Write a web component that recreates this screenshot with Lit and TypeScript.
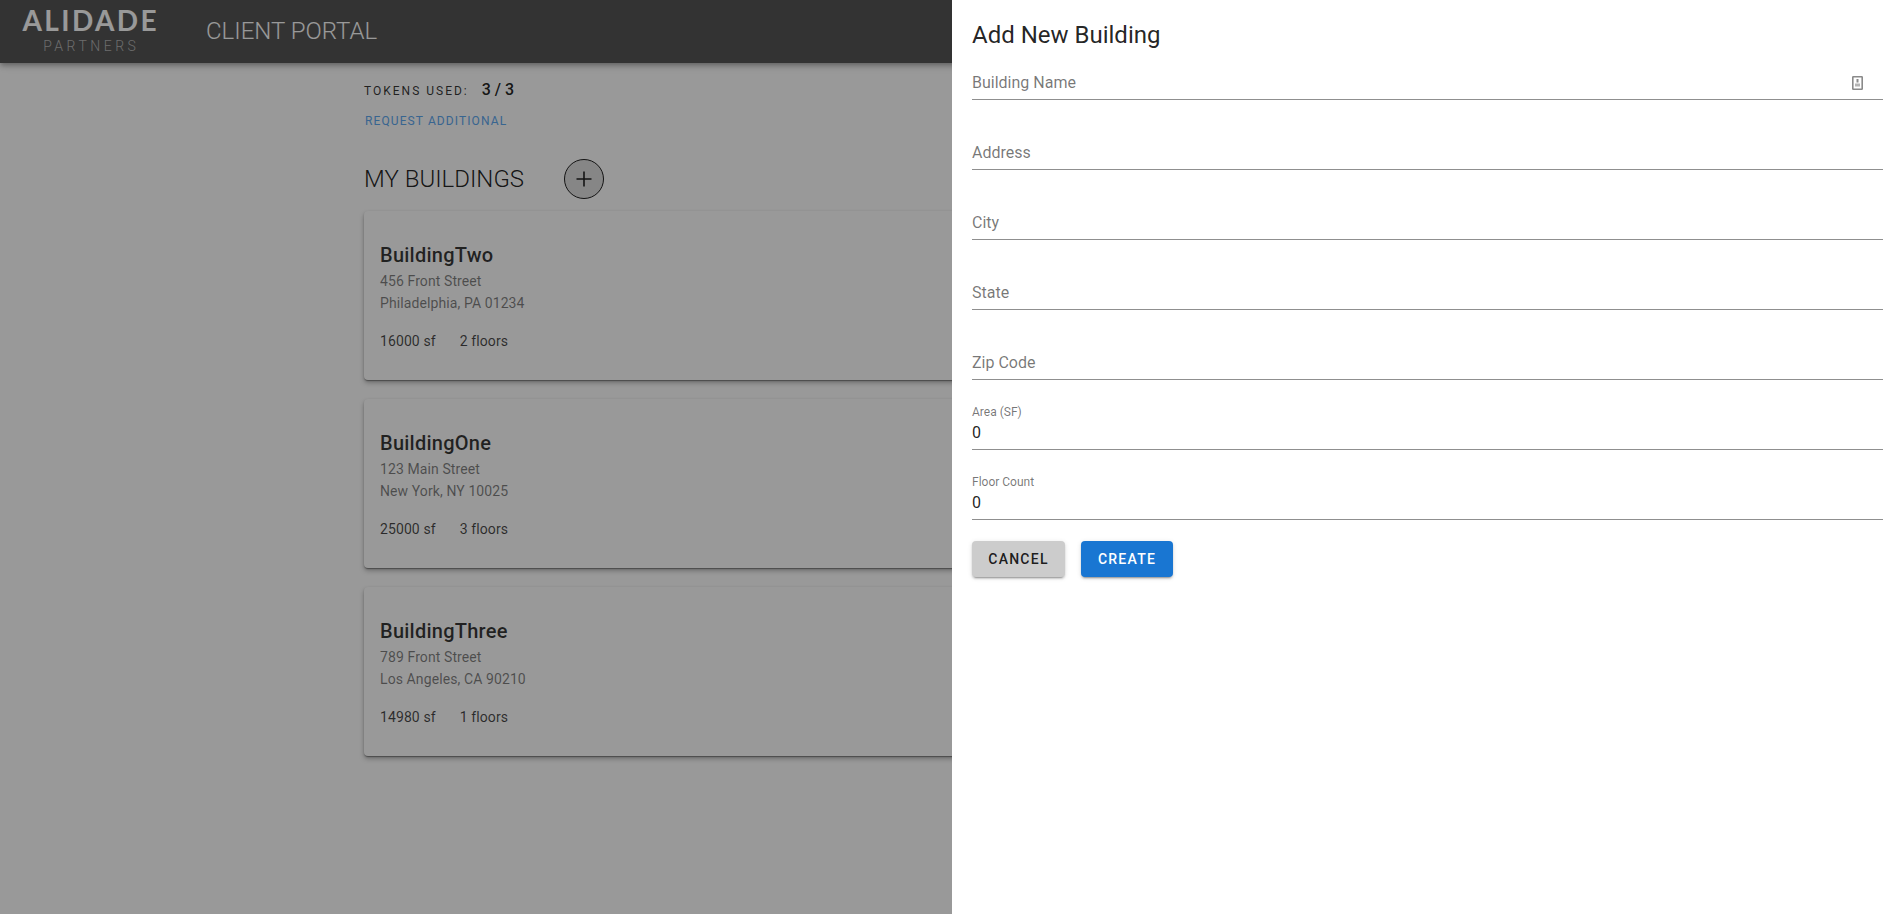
import { LitElement, html, css, svg } from "lit";
import { customElement } from "lit/decorators.js";

const buildings = [
  { name: "BuildingTwo", street: "456 Front Street", city: "Philadelphia, PA 01234", area: "16000 sf", floors: "2 floors" },
  { name: "BuildingOne", street: "123 Main Street", city: "New York, NY 10025", area: "25000 sf", floors: "3 floors" },
  { name: "BuildingThree", street: "789 Front Street", city: "Los Angeles, CA 90210", area: "14980 sf", floors: "1 floors" },
];

const plainFields = ["Building Name", "Address", "City", "State", "Zip Code"];
const valueFields = ["Area (SF)", "Floor Count"];

@customElement("app-root")
export class AppRoot extends LitElement {
  static styles = css`
    :host {
      display: block;
      position: relative;
      height: 914px;
      overflow: hidden;
      background: #fff;
      font-family: Roboto, "Liberation Sans", sans-serif;
      color: rgba(0, 0, 0, 0.87);
    }
    .topbar {
      height: 63px;
      background: #555;
      box-shadow: 0 2px 4px -1px rgba(0,0,0,.2), 0 4px 5px rgba(0,0,0,.14), 0 1px 10px rgba(0,0,0,.12);
      display: flex;
      align-items: flex-start;
      padding-left: 22px;
      position: relative;
    }
    .logo { display: flex; flex-direction: column; align-items: center; width: 135px; padding-top: 6px; }
    .logo-main {
      font-family: Lato, "Open Sans", sans-serif;
      font-weight: 700;
      font-size: 28px;
      line-height: 28px;
      letter-spacing: 2.4px;
      margin-right: -2.4px;
      color: #fff;
    }
    .logo-sub {
      margin-top: 5px;
      font-size: 14px;
      line-height: 14px;
      letter-spacing: 3.5px;
      margin-right: -3.5px;
      font-weight: 300;
      color: #b5b5b5;
    }
    .portal {
      margin-left: 49px;
      font-size: 24px;
      line-height: 62px;
      font-weight: 300;
      color: #fff;
    }
    .main { padding: 17px 0 0 364px; }
    .tokens { display: flex; align-items: baseline; height: 22px; }
    .tokens-label { font-size: 12px; letter-spacing: 2px; color: rgba(0,0,0,.8); }
    .tokens-value { font-size: 16px; font-weight: 500; letter-spacing: 0; margin-left: 13px; }
    .request { margin-top: 12px; margin-left: 1px; font-size: 12px; letter-spacing: 1.1px; font-weight: 400; color: #5ea8f0; line-height: 14px; }
    .heading { display: flex; align-items: center; margin-top: 31px; height: 40px; }
    .heading h2 { margin: 0; font-size: 24px; font-weight: 300; width: 200px; }
    .fab {
      width: 40px; height: 40px; border-radius: 50%;
      border: 1px solid #222; box-sizing: border-box;
      background: #e0e0e0; display: flex; align-items: center; justify-content: center;
    }
    .fab svg { width: 20px; height: 20px; }
    .cards { display: flex; flex-direction: column; gap: 19px; margin-top: 12px; }
    .card {
      width: 1172px; height: 169px; box-sizing: border-box;
      border-radius: 4px; background: #fff;
      padding: 32px 16px 0;
      box-shadow: 0 2px 1px -1px rgba(0,0,0,.2), 0 1px 1px rgba(0,0,0,.14), 0 1px 3px rgba(0,0,0,.12), 0 3px 5px rgba(0,0,0,.25);
    }
    .card-name { font-size: 20px; line-height: 24px; font-weight: 500; letter-spacing: 0.25px; margin-bottom: 3px; color: rgba(0,0,0,.78); }
    .card-addr { font-size: 14px; line-height: 22px; letter-spacing: .1px; color: rgba(0,0,0,.5); }
    .card-meta { display: flex; gap: 24px; margin-top: 16px; font-size: 14px; line-height: 22px; letter-spacing: .1px; color: rgba(0,0,0,.72); }
    .backdrop { position: absolute; inset: 0; background: rgba(0,0,0,.4); }
    .panel {
      position: absolute; top: 0; right: 0; bottom: 0; width: 948px;
      background: #fff; box-sizing: border-box; padding: 22px 17px 0 20px;
    }
    .panel h3 { margin: 0; font-size: 24px; line-height: 26px; font-weight: 400; color: rgba(0,0,0,.87); }
    .field { position: relative; height: 32px; margin-top: 37px; border-bottom: 1px solid #8f8f8f; display: flex; align-items: center; }
    .field.first { margin-top: 19px; }
    .field .ph { font-size: 16px; margin-top: -2px; color: rgba(0,0,0,.54); }
    .field .val { font-size: 16px; margin-top: -2px; color: rgba(0,0,0,.87); }
    .field .small { position: absolute; left: 0; top: -12px; font-size: 12px; line-height: 14px; color: rgba(0,0,0,.54); }
    .field svg { position: absolute; right: 20px; top: 9px; width: 11px; height: 14px; }
    .actions { display: flex; gap: 16px; margin-top: 21px; }
    .btn {
      height: 36px; display: flex; align-items: center; justify-content: center;
      border-radius: 4px; font-size: 14px; font-weight: 500; letter-spacing: 1.25px;
      box-shadow: 0 3px 1px -2px rgba(0,0,0,.2), 0 2px 2px rgba(0,0,0,.14), 0 1px 5px rgba(0,0,0,.12);
    }
    .cancel { width: 93px; background: #ccc; color: rgba(0,0,0,.87); }
    .create { width: 92px; background: #1976d2; color: #fff; }
  `;

  render() {
    return html`
      <div class="topbar">
        <div class="logo">
          <div class="logo-main">ALIDADE</div>
          <div class="logo-sub">PARTNERS</div>
        </div>
        <div class="portal">CLIENT PORTAL</div>
      </div>
      <div class="main">
        <div class="tokens">
          <span class="tokens-label">TOKENS USED:</span>
          <span class="tokens-value">3 / 3</span>
        </div>
        <div class="request">REQUEST ADDITIONAL</div>
        <div class="heading">
          <h2>MY BUILDINGS</h2>
          <div class="fab">
            <svg viewBox="0 0 20 20"><path d="M10 2.5v15M2.5 10h15" stroke="#222" stroke-width="1.6" fill="none" /></svg>
          </div>
        </div>
        <div class="cards">
          ${buildings.map(
            (b) => html`<div class="card">
              <div class="card-name">${b.name}</div>
              <div class="card-addr">${b.street}</div>
              <div class="card-addr">${b.city}</div>
              <div class="card-meta"><span>${b.area}</span><span>${b.floors}</span></div>
            </div>`
          )}
        </div>
      </div>
      <div class="backdrop"></div>
      <div class="panel">
        <h3>Add New Building</h3>
        ${plainFields.map(
          (f, i) => html`<div class="field ${i === 0 ? "first" : ""}">
            <span class="ph">${f}</span>
            ${i === 0
              ? svg`<svg viewBox="0 0 11 14"><rect x="0.8" y="0.8" width="9.4" height="12.4" rx="0.5" fill="none" stroke="#8a8a8a" stroke-width="1.6"/><rect x="4.5" y="3" width="2" height="3.5" fill="#8a8a8a"/><rect x="3" y="7.5" width="5" height="3" fill="#b5b5b5"/></svg>`
              : ""}
          </div>`
        )}
        ${valueFields.map(
          (f) => html`<div class="field">
            <span class="small">${f}</span>
            <span class="val">0</span>
          </div>`
        )}
        <div class="actions">
          <div class="btn cancel">CANCEL</div>
          <div class="btn create">CREATE</div>
        </div>
      </div>
    `;
  }
}
